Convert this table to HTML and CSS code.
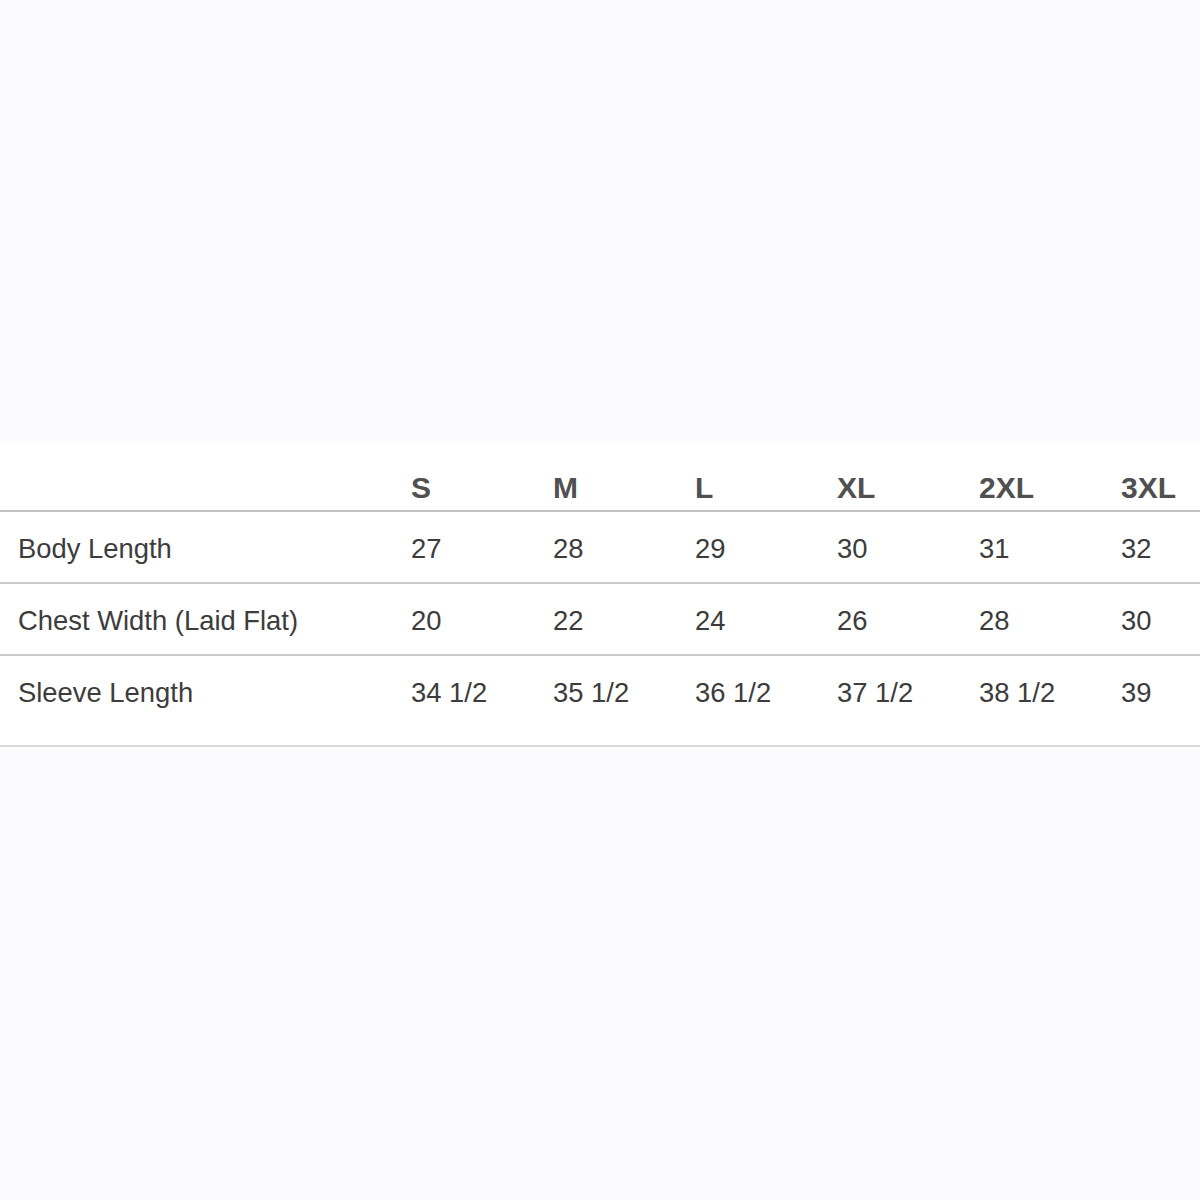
FILE: index.html
```html
<!DOCTYPE html>
<html>
<head>
<meta charset="utf-8">
<link rel="stylesheet" href="styles.css">
</head>
<body>
<div class="band">
<table class="sizes">
<colgroup><col class="c-label"><col class="c-size"><col class="c-size"><col class="c-size"><col class="c-size"><col class="c-size"><col class="c-size"></colgroup>
<thead>
<tr><th></th><th>S</th><th>M</th><th>L</th><th>XL</th><th>2XL</th><th>3XL</th></tr>
</thead>
<tbody>
<tr><td>Body Length</td><td>27</td><td>28</td><td>29</td><td>30</td><td>31</td><td>32</td></tr>
<tr><td>Chest Width (Laid Flat)</td><td>20</td><td>22</td><td>24</td><td>26</td><td>28</td><td>30</td></tr>
<tr class="last"><td>Sleeve Length</td><td>34 1/2</td><td>35 1/2</td><td>36 1/2</td><td>37 1/2</td><td>38 1/2</td><td>39</td></tr>
</tbody>
</table>
</div>
</body>
</html>
```
FILE: styles.css
```css
html, body {
  margin: 0;
  padding: 0;
  background: #fbfbfd;
}
body {
  padding-top: 443px;
  font-family: "Liberation Sans", Arial, sans-serif;
}
.band {
  background: #ffffff;
  width: 1200px;
  overflow: hidden;
}
.sizes {
  table-layout: fixed;
  border-collapse: collapse;
  width: 1245px;
}
.c-label { width: 393px; }
.c-size { width: 142px; }
.sizes th {
  text-align: left;
  font-weight: bold;
  font-size: 30px;
  line-height: 30px;
  color: #505050;
  padding: 30px 0 7px 18px;
  border-bottom: 2px solid #c2c2c2;
  vertical-align: bottom;
}
.sizes td {
  font-size: 27.4px;
  line-height: 27px;
  color: #3c3c3c;
  padding: 23px 0 20px 18px;
  border-bottom: 2px solid #c9c9c9;
  white-space: nowrap;
}
.sizes tr.last td {
  padding-bottom: 39px;
  border-bottom: 2px solid #dcdcdc;
}
```
